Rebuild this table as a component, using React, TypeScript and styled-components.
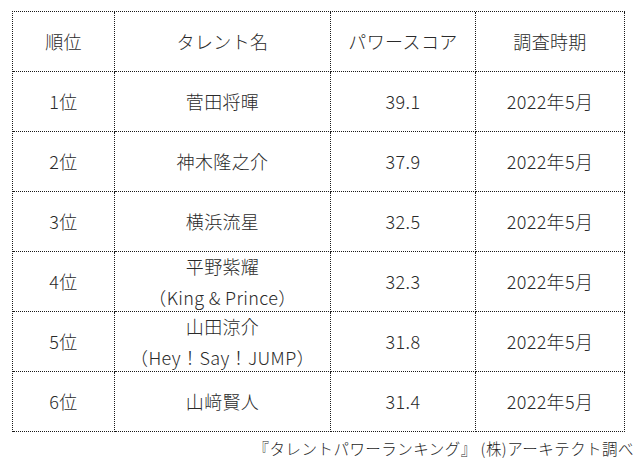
import React from "react";
import styled, { createGlobalStyle } from "styled-components";

const Global = createGlobalStyle`
  html, body { margin: 0; padding: 0; background: #fff; }
  body { font-family: "Noto Sans CJK JP", "Noto Sans", sans-serif; color: #2a2a2a; }
`;

const Page = styled.div`
  width: 640px;
  height: 462px;
  padding: 11px 0 0 12px;
  box-sizing: border-box;
  display: flex;
  flex-direction: column;
`;

const Grid = styled.div`
  display: grid;
  grid-template-columns: 102px 216px 145px 149px;
  grid-auto-rows: 60px;
  width: max-content;
  border-left: 1px dotted #1a1a1a;
  border-top: 1px dotted #1a1a1a;
`;

const Cell = styled.div`
  border-right: 1px dotted #1a1a1a;
  border-bottom: 1px dotted #1a1a1a;
  display: flex;
  flex-direction: column;
  align-items: center;
  justify-content: center;
  font-size: 18px;
  font-weight: 300;
  line-height: 31px;
  letter-spacing: 0.02em;
  white-space: nowrap;
`;

const Footer = styled.div`
  align-self: flex-end;
  margin-right: 6px;
  margin-top: 5px;
  font-size: 15.5px;
  font-weight: 300;
  line-height: 22px;
  letter-spacing: 0.03em;
  color: #1e1e1e;
  white-space: nowrap;
`;

const headers = ["順位", "タレント名", "パワースコア", "調査時期"];
const rows: { rank: string; name: string[]; score: string; date: string }[] = [
  { rank: "1位", name: ["菅田将暉"], score: "39.1", date: "2022年5月" },
  { rank: "2位", name: ["神木隆之介"], score: "37.9", date: "2022年5月" },
  { rank: "3位", name: ["横浜流星"], score: "32.5", date: "2022年5月" },
  { rank: "4位", name: ["平野紫耀", "（King & Prince）"], score: "32.3", date: "2022年5月" },
  { rank: "5位", name: ["山田涼介", "（Hey！Say！JUMP）"], score: "31.8", date: "2022年5月" },
  { rank: "6位", name: ["山﨑賢人"], score: "31.4", date: "2022年5月" },
];

export default function App() {
  return (
    <Page>
      <Global />
      <Grid>
        {headers.map((h) => (
          <Cell key={h}>{h}</Cell>
        ))}
        {rows.map((r) => (
          <React.Fragment key={r.rank}>
            <Cell>{r.rank}</Cell>
            <Cell>
              {r.name.map((n) => (
                <span key={n}>{n}</span>
              ))}
            </Cell>
            <Cell>{r.score}</Cell>
            <Cell>{r.date}</Cell>
          </React.Fragment>
        ))}
      </Grid>
      <Footer>『タレントパワーランキング』 (株)アーキテクト調べ</Footer>
    </Page>
  );
}
